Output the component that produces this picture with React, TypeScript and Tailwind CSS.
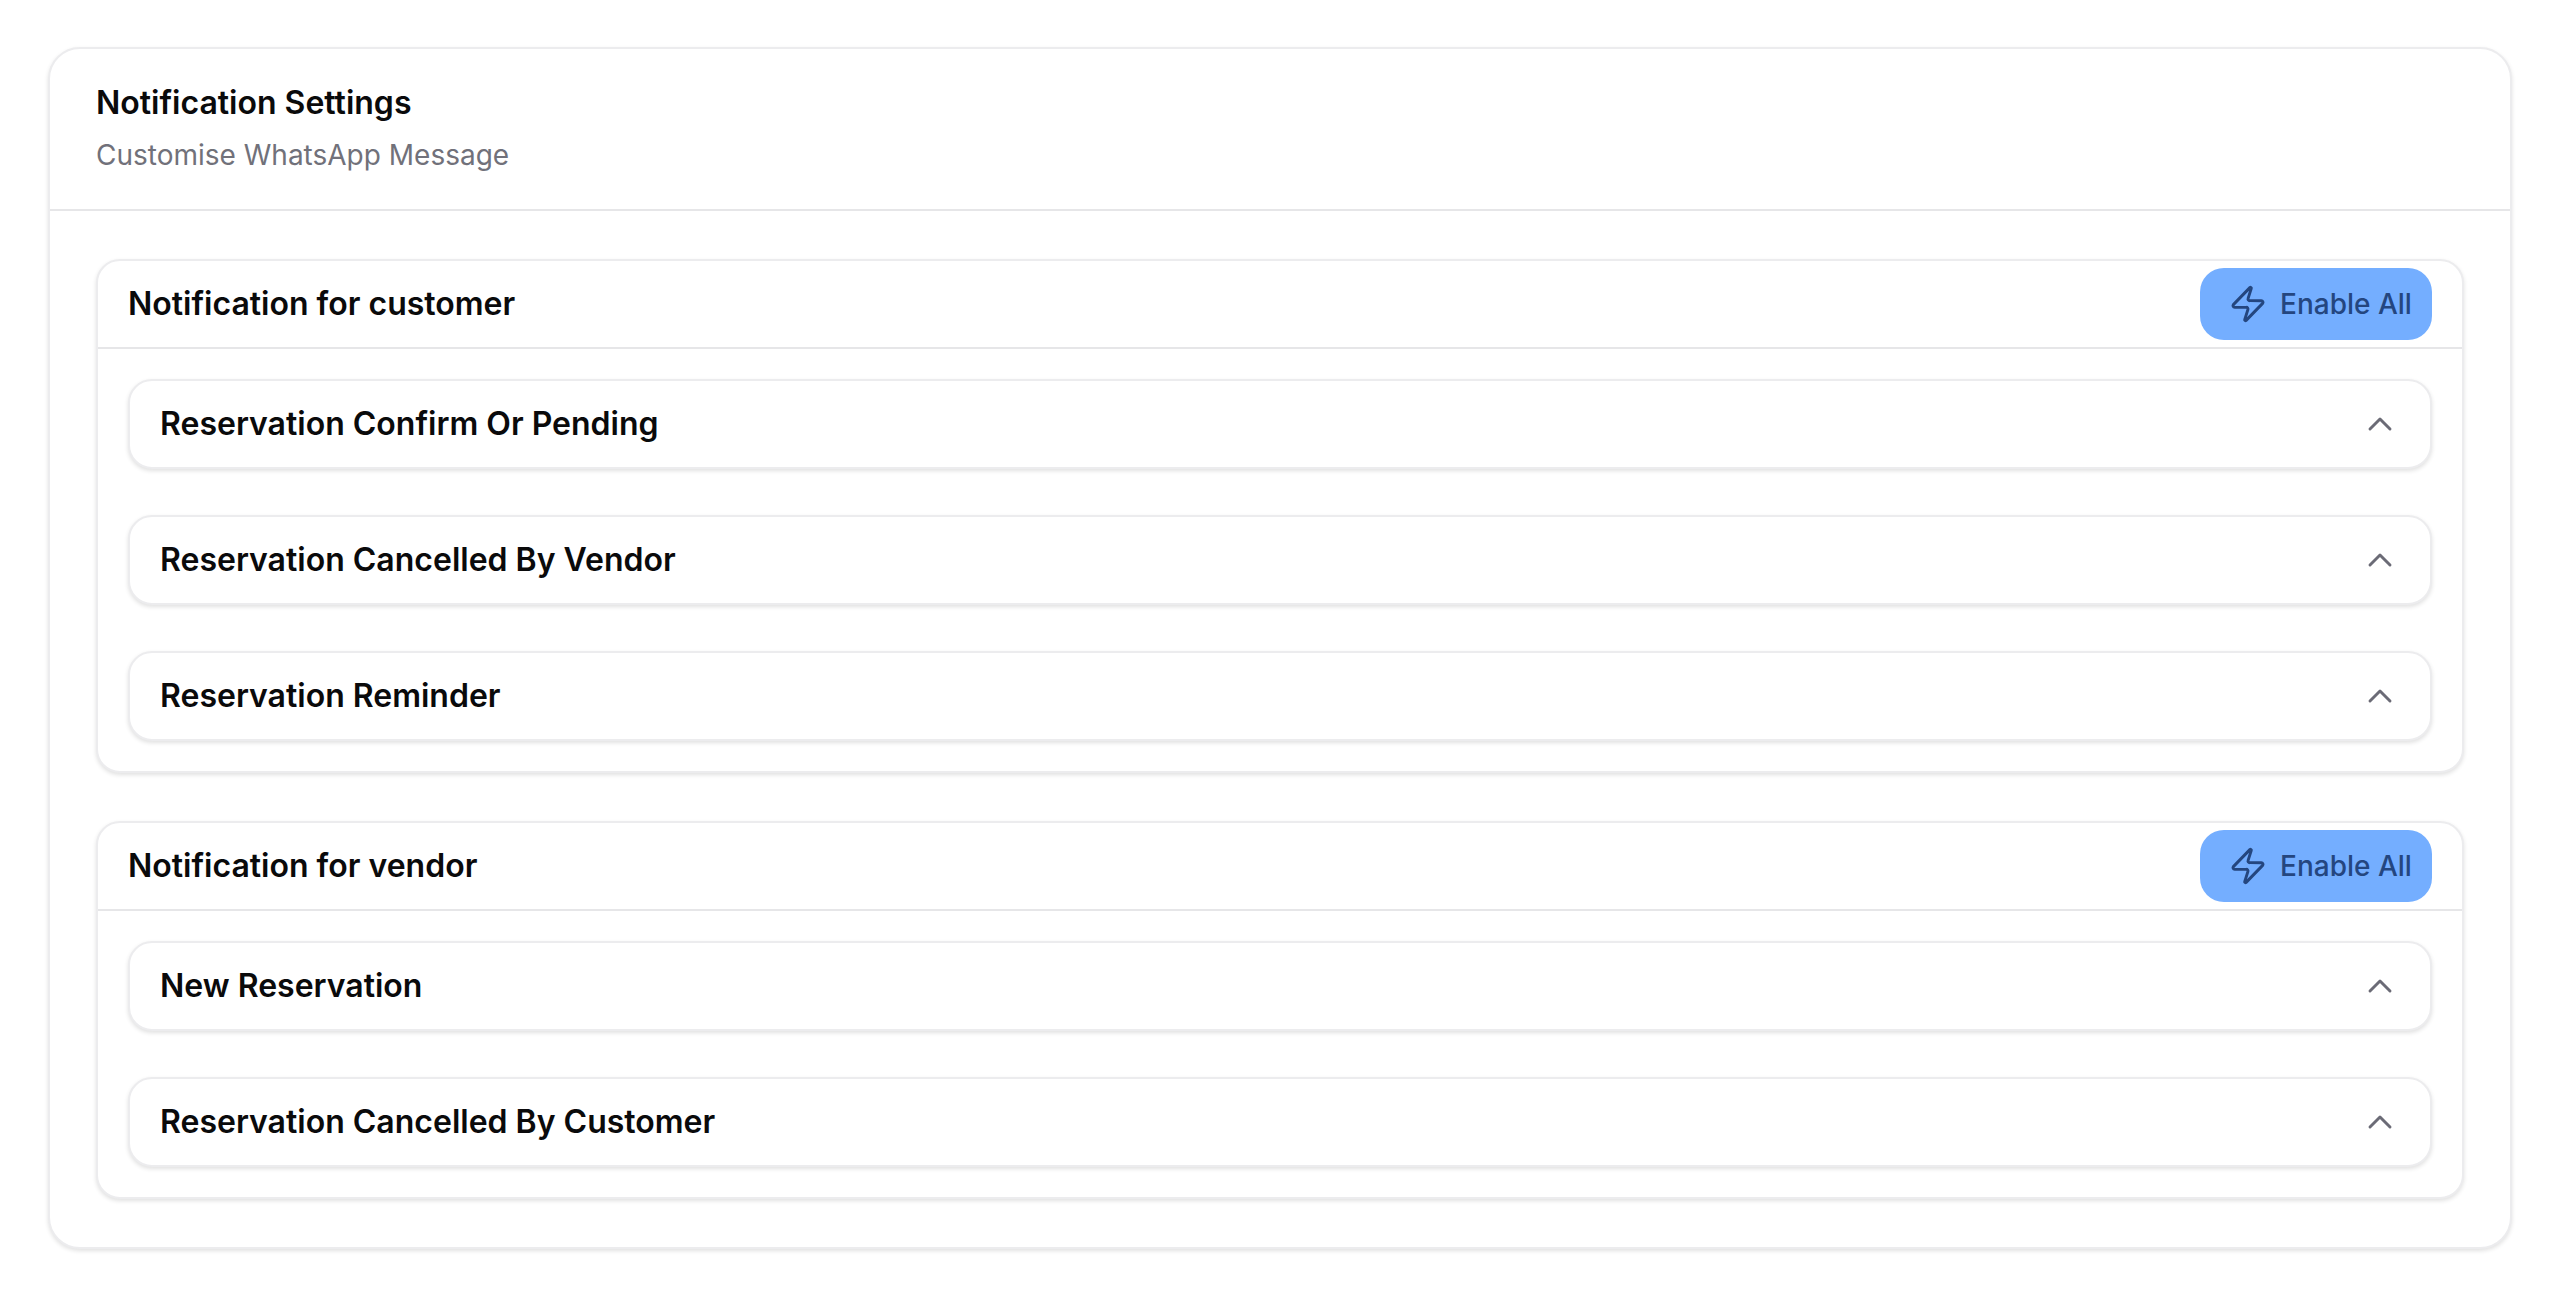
import { ChevronUp, Zap } from "lucide-react";

function Item({ title }: { title: string }) {
  return (
    <div className="flex h-[90px] items-center justify-between rounded-[24px] border-2 border-[#ececee] bg-white pl-[30px] pr-[30px] shadow-[0_2px_4px_rgba(0,0,0,0.12)]">
      <span className="text-[32px] font-semibold text-[#0a0a0b]">{title}</span>
      <ChevronUp className="h-10 w-10 text-[#6b6b76]" strokeWidth={1.75} />
    </div>
  );
}

function Section({ title, items }: { title: string; items: string[] }) {
  return (
    <section className="rounded-[24px] border-2 border-[#ececee] bg-white shadow-[0_2px_4px_rgba(0,0,0,0.12)]">
      <div className="flex items-center justify-between border-b-2 border-[#e6e6e8] py-[7px] pl-[30px] pr-[30px]">
        <h3 className="text-[32px] font-semibold text-[#0a0a0b]">{title}</h3>
        <button className="flex h-[72px] w-[232px] items-center gap-3 rounded-[24px] bg-[#74aeff] pl-7 text-[28px] font-medium text-[#24467f]">
          <Zap className="h-10 w-10" strokeWidth={1.75} />
          Enable All
        </button>
      </div>
      <div className="flex flex-col gap-[46px] p-[30px]">
        {items.map((item) => (
          <Item key={item} title={item} />
        ))}
      </div>
    </section>
  );
}

export default function App() {
  return (
    <div className="min-h-[1294px] bg-white px-12 pt-[47px] font-['Inter',sans-serif]">
      <div className="rounded-[32px] border-2 border-[#ececee] bg-white shadow-[0_2px_4px_rgba(0,0,0,0.12)]">
        <div className="border-b-2 border-[#e6e6e8] px-[46px] pb-[30px] pt-[30px]">
          <h2 className="text-[32px] font-semibold leading-[48px] text-[#0a0a0b]">Notification Settings</h2>
          <p className="mt-1 text-[28px] leading-[48px] text-[#71717a]">Customise WhatsApp Message</p>
        </div>
        <div className="flex flex-col gap-12 px-[46px] py-12">
          <Section
            title="Notification for customer"
            items={["Reservation Confirm Or Pending", "Reservation Cancelled By Vendor", "Reservation Reminder"]}
          />
          <Section title="Notification for vendor" items={["New Reservation", "Reservation Cancelled By Customer"]} />
        </div>
      </div>
    </div>
  );
}
